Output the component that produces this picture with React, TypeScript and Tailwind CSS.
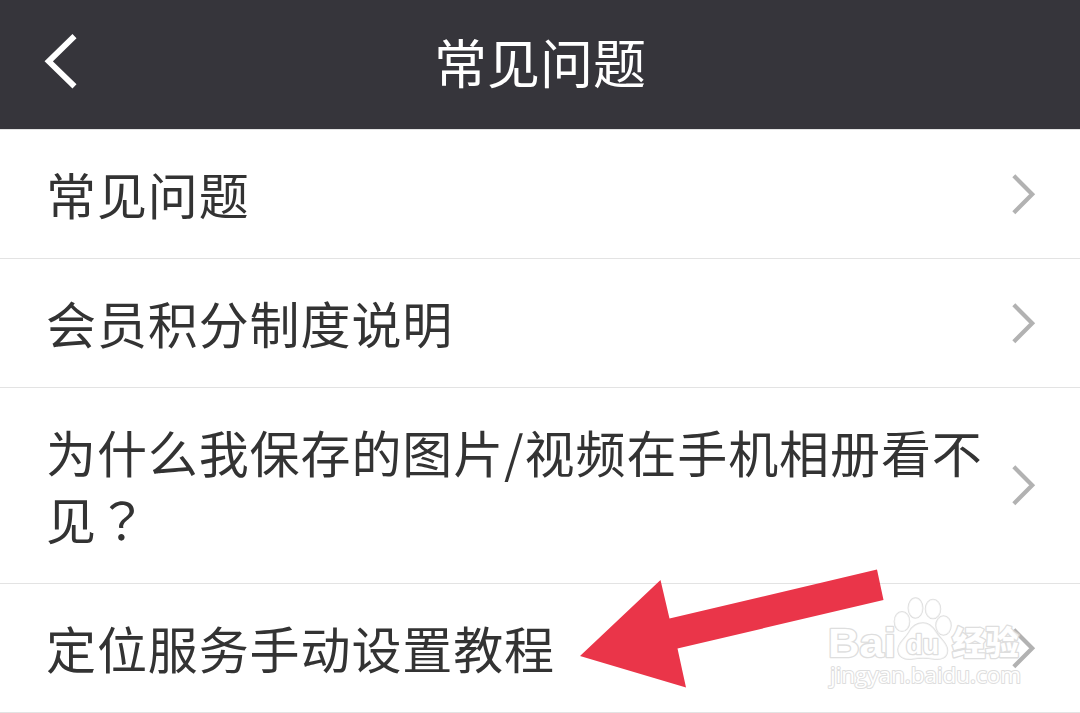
type FaqItem = {
  id: number;
  title: string;
};

const FAQ_ITEMS: FaqItem[] = [
  { id: 1, title: '常见问题' },
  { id: 2, title: '会员积分制度说明' },
  { id: 3, title: '为什么我保存的图片/视频在手机相册看不见？' },
  { id: 4, title: '定位服务手动设置教程' },
];

function BackIcon() {
  return (
    <svg width="34" height="56" viewBox="0 0 34 56" fill="none" className="block">
      <path d="M30.5 3.2L4.7 28.3L30.5 53.3" stroke="#ffffff" strokeWidth="5.8" />
    </svg>
  );
}

function ArrowRight() {
  return (
    <svg width="24" height="42" viewBox="0 0 24 42" fill="none" className="block shrink-0">
      <path d="M1.8 2.7L20.2 21.3L1.8 39.8" stroke="#b2b2b2" strokeWidth="4.2" />
    </svg>
  );
}

function Row({ title }: { title: string }) {
  return (
    <li className="flex items-center justify-between border-b border-[#e3e3e3] pt-[30px] pb-[31px] pl-[46px] pr-11">
      {/* zh-TW glyphs keep the full-width question mark centred in its cell */}
      <span className="w-[945px] text-[50px] leading-[67px] tracking-[0.9px] text-[#333333]">
        {title.endsWith('？') ? (
          <>
            {title.slice(0, -1)}
            <span lang="zh-TW" className="font-['Noto_Sans_CJK_TC',sans-serif]">？</span>
          </>
        ) : (
          title
        )}
      </span>
      <ArrowRight />
    </li>
  );
}

// Red pointer towards the last row
function Pointer() {
  return (
    <svg width="310" height="124" viewBox="0 0 310 124" className="absolute left-[578px] top-[567px]">
      <polygon points="2,89 82.5,13 91.5,51.5 299,2.5 305.5,33 99.5,81.5 108,120.5" fill="#ea3549" />
    </svg>
  );
}

function Watermark() {
  return (
    <svg
      width="210"
      height="105"
      viewBox="0 0 210 105"
      className="absolute left-[822px] top-[592px] font-['Liberation_Sans','Noto_Sans_CJK_SC',sans-serif] opacity-80"
      fill="#ffffff"
      stroke="#d6d6d6"
      strokeWidth="2.6"
      strokeLinejoin="round"
      paintOrder="stroke"
    >
      <g fillOpacity="0.6" strokeWidth="1.5">
        <ellipse cx="80" cy="29.5" rx="7.6" ry="9.8" />
        <ellipse cx="93.5" cy="16" rx="7.2" ry="10" />
        <ellipse cx="111" cy="17" rx="7.5" ry="9.5" />
        <ellipse cx="121.5" cy="33.5" rx="7.5" ry="9.5" />
        <path d="M101 31C107 31 111 35 114 40C118 47 125.5 51 125.5 58.5C125.5 66 119 68 112 67C104 65.5 98 65.5 90 67C82 68 76 65 76 57.5C76 51 83 47 87 40C90 34.5 95 31 101 31Z" />
      </g>
      <text x="6" y="64.5" fontSize="41" fontWeight="700" textLength="68" lengthAdjust="spacingAndGlyphs">Bai</text>
      <text x="84" y="62" fontSize="27" fontWeight="700" textLength="33" lengthAdjust="spacingAndGlyphs">du</text>
      <text x="130" y="62.5" fontSize="33.5" fontWeight="900">经验</text>
      <text x="8" y="91" fontSize="22" strokeWidth="2" textLength="191" lengthAdjust="spacingAndGlyphs" className="font-['Open_Sans',sans-serif]">jingyan.baidu.com</text>
    </svg>
  );
}

export default function App() {
  return (
    <div className="relative h-[713px] w-[1080px] overflow-hidden bg-white font-['Noto_Sans_CJK_SC',sans-serif]">
      <header className="grid h-[129px] grid-cols-[1fr_auto_1fr] items-center bg-[#36353b] px-11">
        <button type="button" aria-label="返回" className="mb-[7px] justify-self-start">
          <BackIcon />
        </button>
        <h1 className="mb-1.5 text-[53px] leading-[67px] text-white">常见问题</h1>
        <span />
      </header>

      <ul className="border-t border-[#e3e3e3]">
        {FAQ_ITEMS.map((item) => (
          <Row key={item.id} title={item.title} />
        ))}
      </ul>

      <Pointer />
      <Watermark />
    </div>
  );
}
